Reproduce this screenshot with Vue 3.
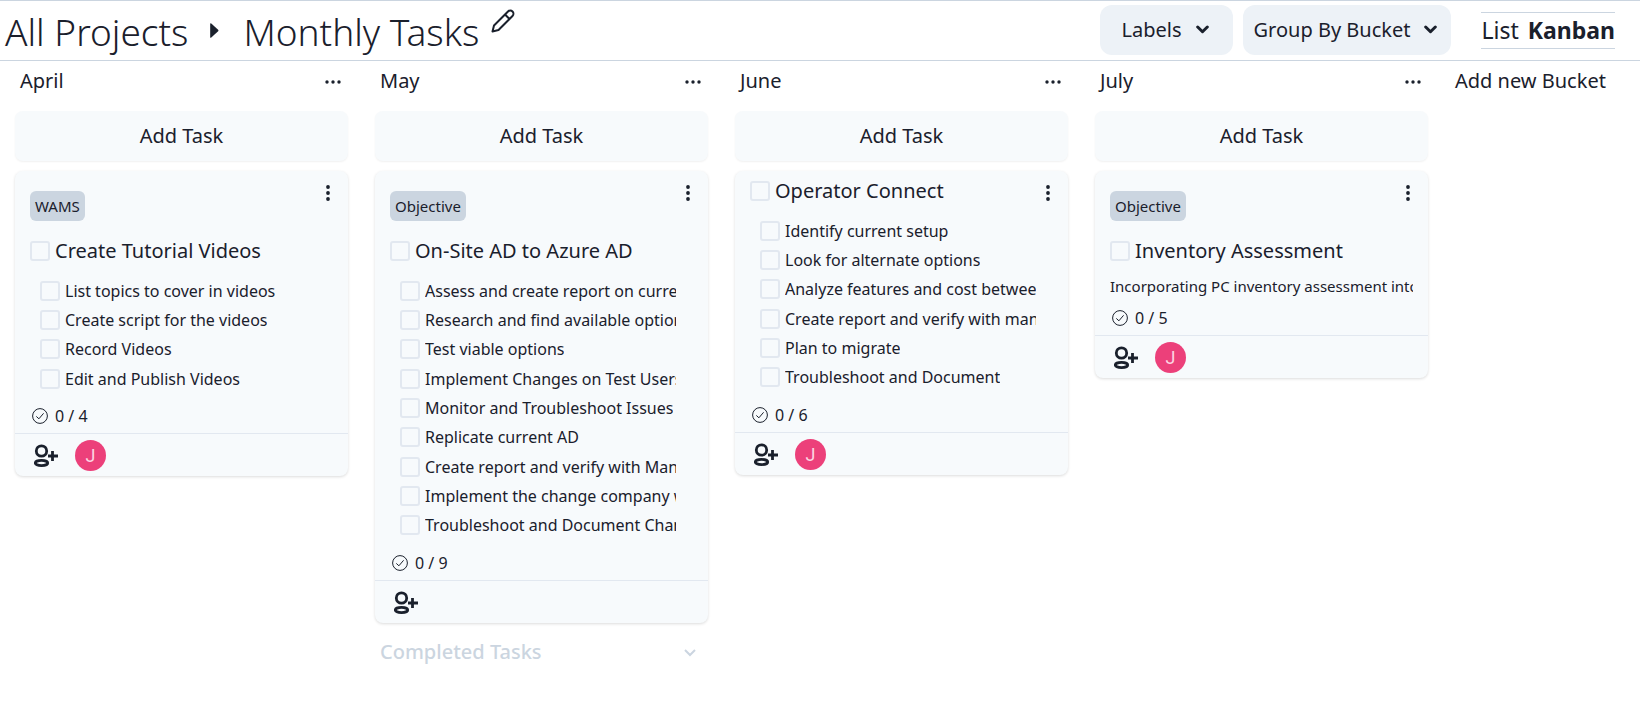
<script setup>
import { ref } from 'vue'

const editing = ref(false)

const buckets = [
  {
    name: 'April',
    tasks: [
      {
        id: 'tutorials',
        label: 'WAMS',
        title: 'Create Tutorial Videos',
        steps: ['List topics to cover in videos', 'Create script for the videos', 'Record Videos', 'Edit and Publish Videos'],
        total: 4,
        assignee: 'J'
      }
    ]
  },
  {
    name: 'May',
    completed: true,
    tasks: [
      {
        id: 'azure',
        label: 'Objective',
        title: 'On-Site AD to Azure AD',
        steps: [
          'Assess and create report on current',
          'Research and find available options',
          'Test viable options',
          'Implement Changes on Test Users',
          'Monitor and Troubleshoot Issues',
          'Replicate current AD',
          'Create report and verify with Manager',
          'Implement the change company wide',
          'Troubleshoot and Document Changes'
        ],
        total: 9
      }
    ]
  },
  {
    name: 'June',
    tasks: [
      {
        id: 'operator',
        title: 'Operator Connect',
        steps: [
          'Identify current setup',
          'Look for alternate options',
          'Analyze features and cost between',
          'Create report and verify with manager',
          'Plan to migrate',
          'Troubleshoot and Document'
        ],
        total: 6,
        assignee: 'J'
      }
    ]
  },
  {
    name: 'July',
    tasks: [
      {
        id: 'inventory',
        label: 'Objective',
        title: 'Inventory Assessment',
        note: 'Incorporating PC inventory assessment into',
        total: 5,
        assignee: 'J'
      }
    ]
  }
]
</script>

<template>
  <div class="page">
    <header class="topbar">
      <h1 class="crumbs">
        <a href="#projects">All Projects</a>
        <svg class="caret" viewBox="0 0 8 14" aria-hidden="true"><path d="M0 .8Q0-.3 1 .5L7.4 6.300Q8 7 7.400 7.700L1 13.500Q0 14.300 0 13.200Z" /></svg>
        <span>Monthly Tasks</span>
        <button class="icon-btn edit" type="button" aria-label="Rename project" @click="editing = !editing">
          <svg viewBox="0 0 24 24" aria-hidden="true"><path d="M1.500 22.500 3 16.500 17 2.500a2.800 2.800 0 0 1 4.500 4.500L7.500 21ZM14 5.500l4.500 4.500" /></svg>
        </button>
      </h1>
      <div class="tools">
        <button class="pill labels" type="button">
          Labels
          <svg class="chev" viewBox="0 0 13 9" aria-hidden="true"><path d="M1.700 2 6.500 6.700 11.300 2" /></svg>
        </button>
        <button class="pill" type="button">
          Group By Bucket
          <svg class="chev" viewBox="0 0 13 9" aria-hidden="true"><path d="M1.700 2 6.500 6.700 11.300 2" /></svg>
        </button>
        <nav class="views">
          <a href="#list">List</a>
          <a href="#kanban" class="active">Kanban</a>
        </nav>
      </div>
    </header>

    <main class="board">
      <section v-for="bucket in buckets" :key="bucket.name" class="bucket">
        <div class="bucket-head">
          <h2>{{ bucket.name }}</h2>
          <button class="icon-btn more" type="button" :aria-label="bucket.name + ' menu'">
            <svg viewBox="0 0 16 4" aria-hidden="true"><circle cx="2" cy="2" r="1.700" /><circle cx="8" cy="2" r="1.700" /><circle cx="14" cy="2" r="1.700" /></svg>
          </button>
        </div>
        <button class="add-task" type="button">Add Task</button>

        <article v-for="task in bucket.tasks" :key="task.id" class="card">
          <div class="card-body" :class="{ tagged: task.label }">
            <span v-if="task.label" class="tag">{{ task.label }}</span>
            <label class="title">
              <input type="checkbox" />
              <span>{{ task.title }}</span>
            </label>
            <ul v-if="task.steps" class="steps">
              <li v-for="step in task.steps" :key="step">
                <label><input type="checkbox" /><span>{{ step }}</span></label>
              </li>
            </ul>
            <p v-if="task.note" class="note">{{ task.note }}</p>
            <div class="progress">
              <svg viewBox="0 0 16 16" aria-hidden="true"><circle cx="8" cy="8" r="7.400" /><path d="M4.300 8.400 6.900 10.800 11.600 5.300" /></svg>
              <span>0 / {{ task.total }}</span>
            </div>
            <button class="icon-btn kebab" type="button" :aria-label="task.title + ' menu'">
              <svg viewBox="0 0 4 16" aria-hidden="true"><circle cx="2" cy="2" r="1.900" /><circle cx="2" cy="8" r="1.900" /><circle cx="2" cy="14" r="1.900" /></svg>
            </button>
          </div>
          <footer class="card-foot">
            <button class="icon-btn assign" type="button" aria-label="Assign person">
              <svg viewBox="0 0 24 24" aria-hidden="true"><circle cx="7.500" cy="8" r="5.200" /><ellipse cx="7.500" cy="20" rx="6.200" ry="2.600" /><path d="M18.500 8v10M14 13h10" /></svg>
            </button>
            <span v-if="task.assignee" class="avatar">{{ task.assignee }}</span>
          </footer>
        </article>

        <button v-if="bucket.completed" class="completed" type="button">
          Completed Tasks
          <svg viewBox="0 0 12 9" aria-hidden="true"><path d="M1 2 6 7 11 2" /></svg>
        </button>
      </section>
      <button class="add-bucket" type="button">Add new Bucket</button>
    </main>
  </div>
</template>

<style>
body {
  background: #fff;
}
</style>

<style scoped>
.page {
  color: #1a202c;
  font: 20px/30px "Noto Sans", sans-serif;
}
.page * {
  box-sizing: border-box;
}
button {
  padding: 0;
  border: 0;
  background: none;
  color: inherit;
  font: inherit;
  cursor: pointer;
}
a {
  color: inherit;
  text-decoration: none;
}
svg {
  display: block;
  flex: none;
  fill: #1a202c;
}
h1,
h2,
p,
ul {
  margin: 0;
  padding: 0;
  font-weight: 400;
}
.topbar {
  display: flex;
  align-items: center;
  justify-content: space-between;
  height: 61px;
  border-top: 1px solid #cbd5e0;
  border-bottom: 1px solid #cbd5e0;
}
.crumbs {
  display: flex;
  align-items: center;
  padding: 3px 0 0 5px;
  font: 300 37px/52px "Noto Sans", sans-serif;
}
.caret {
  width: 9px;
  height: 15px;
  margin: 0 24px 4px 22px;
}
.edit {
  align-self: flex-start;
  margin: 3px 0 0 12px;
}
.edit svg {
  width: 24px;
  height: 24px;
  fill: none;
  stroke: #1a202c;
  stroke-width: 2;
  stroke-linejoin: round;
}
.tools {
  display: flex;
  align-items: center;
}
.pill {
  display: flex;
  align-items: center;
  gap: 14px;
  height: 50px;
  margin: 0 10px 2px 0;
  padding: 0 14px 0 11px;
  border-radius: 12px;
  background: #edf2f7;
}
.labels {
  padding: 0 24px 0 21px;
}
.chev {
  width: 13px;
  height: 9px;
  fill: none;
  stroke: #1a202c;
  stroke-width: 3;
  stroke-linecap: round;
  stroke-linejoin: round;
}
.views {
  display: flex;
  gap: 9px;
  margin: 0 25px 0 20px;
  padding: 1px 0;
  border-top: 1px solid #cbd5e0;
  border-bottom: 1px solid #cbd5e0;
  font-size: 23px;
  line-height: 33px;
}
.active {
  font-weight: 700;
}
.board {
  display: flex;
  align-items: flex-start;
}
.bucket {
  flex: 0 0 360px;
  min-width: 0;
  padding: 5px 12px 0 15px;
}
.bucket-head {
  display: flex;
  align-items: center;
  justify-content: space-between;
  padding: 0 7px 0 5px;
}
h2 {
  font-size: 20px;
  line-height: 30px;
}
.more {
  padding-top: 2px;
}
.more svg {
  width: 16px;
  height: 4px;
}
.add-task {
  display: block;
  width: 100%;
  height: 50px;
  margin: 15px 0 10px;
  border-radius: 8px;
  background: #f7fafc;
  box-shadow: 0 1px 2px rgba(0, 0, 0, 0.06);
}
.card {
  border-radius: 8px;
  background: #f7fafc;
  box-shadow: 0 1px 3px rgba(0, 0, 0, 0.14);
}
.card-body {
  position: relative;
  padding: 0 15px 2px;
}
.tagged {
  padding-top: 20px;
}
.kebab {
  position: absolute;
  top: 14px;
  right: 18px;
}
.kebab svg {
  width: 4px;
  height: 16px;
}
.tag {
  display: block;
  width: fit-content;
  margin-bottom: 10px;
  padding: 0 5px;
  border-radius: 6px;
  background: #cbd5e0;
  font-size: 15px;
  line-height: 30px;
}
input {
  flex: none;
  appearance: none;
  width: 20px;
  height: 20px;
  margin: 0;
  border: 2px solid #e2e8f0;
  border-radius: 3px;
}
input:checked {
  background: #4299e1;
}
.title {
  display: flex;
  align-items: center;
  gap: 5px;
  height: 40px;
}
.steps {
  padding: 5px 17px 0 10px;
  list-style: none;
}
.steps label {
  display: flex;
  align-items: center;
  gap: 5px;
  height: 29px;
}
.steps li:nth-child(3n) {
  padding-bottom: 1px;
}
.steps span {
  overflow: hidden;
  white-space: nowrap;
  font-size: 16px;
}
.note {
  margin-bottom: 2px;
  overflow: hidden;
  white-space: nowrap;
  font-size: 15px;
}
.progress {
  display: flex;
  align-items: center;
  gap: 7px;
  padding-left: 2px;
  font-size: 16px;
}
.steps + .progress {
  margin-top: 8px;
}
.progress svg {
  width: 16px;
  height: 16px;
  fill: none;
  stroke: #1a202c;
}
.card-foot {
  display: flex;
  align-items: center;
  gap: 17px;
  height: 43px;
  padding: 0 19px;
  border-top: 1px solid #e2e8f0;
}
.assign svg {
  width: 24px;
  height: 24px;
  fill: none;
  stroke: #1a202c;
  stroke-width: 2.800;
}
.avatar {
  width: 31px;
  height: 31px;
  border-radius: 50%;
  background: #ec407a;
  color: #fbd5e2;
  font: 18px/31px Roboto, sans-serif;
  text-align: center;
}
.completed {
  display: flex;
  align-items: center;
  justify-content: space-between;
  width: 100%;
  margin-top: 14px;
  padding: 0 12px 0 5px;
  color: #cbd5e0;
  font-weight: 500;
}
.completed svg {
  width: 12px;
  height: 9px;
  fill: none;
  stroke: #cbd5e0;
  stroke-width: 2;
}
.add-bucket {
  margin: 5px 0 0 15px;
  white-space: nowrap;
}
</style>
